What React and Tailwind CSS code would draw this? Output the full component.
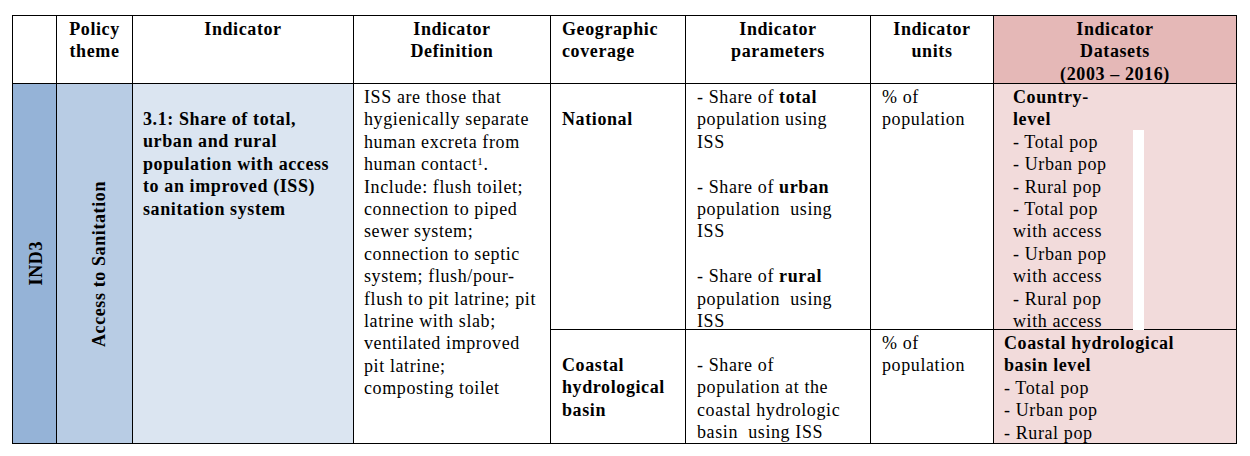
export default function App() {
  const cell = "border-r border-b border-black";
  return (
    <div className="w-[1250px] h-[456px] bg-white pt-[15px] pl-[12px] text-black text-[18px] leading-[22.4px] tracking-[0.6px]" style={{ fontFamily: '"Liberation Serif", "Times New Roman", serif' }}>
      <div className="grid grid-cols-[44px_76px_221px_197px_135px_185px_123px_243px] grid-rows-[68px_246px_114px] w-max border-l border-t border-black">
        {/* header row */}
        <div className={cell}></div>
        <div className={`${cell} font-bold text-center pt-[2px]`}>Policy<br />theme</div>
        <div className={`${cell} font-bold text-center pt-[2px]`}>Indicator</div>
        <div className={`${cell} font-bold text-center pt-[2px]`}>Indicator<br />Definition</div>
        <div className={`${cell} font-bold pl-[11px] pt-[2px]`}>Geographic<br />coverage</div>
        <div className={`${cell} font-bold text-center pt-[2px]`}>Indicator<br />parameters</div>
        <div className={`${cell} font-bold text-center pt-[2px]`}>Indicator<br />units</div>
        <div className={`${cell} font-bold text-center pt-[2px] bg-[#E5B8B7]`}>Indicator<br />Datasets<br />(2003 – 2016)</div>

        {/* body */}
        <div className={`${cell} row-span-2 bg-[#95B3D7] flex items-center justify-center pl-[4px]`}>
          <span className="font-bold [writing-mode:vertical-rl] rotate-180">IND3</span>
        </div>
        <div className={`${cell} row-span-2 bg-[#B8CCE4] flex items-center justify-center pl-[10px]`}>
          <span className="font-bold [writing-mode:vertical-rl] rotate-180">Access to Sanitation</span>
        </div>
        <div className={`${cell} row-span-2 bg-[#DBE5F1] font-bold pl-[10px] pt-[24px]`}>
          3.1: Share of total,<br />urban and rural<br />population with access<br />to an improved (ISS)<br />sanitation system
        </div>
        <div className={`${cell} row-span-2 pl-[10px] pt-[2px]`}>
          ISS are those that<br />hygienically separate<br />human excreta from<br />human contact<sup className="text-[11px]">1</sup>.<br />Include: flush toilet;<br />connection to piped<br />sewer system;<br />connection to septic<br />system; flush/pour-<br />flush to pit latrine; pit<br />latrine with slab;<br />ventilated improved<br />pit latrine;<br />composting toilet
        </div>
        <div className={`${cell} font-bold pl-[11px] pt-[24px]`}>National</div>
        <div className={`${cell} pl-[11px] pt-[2px]`}>
          - Share of <b>total</b><br />population using<br />ISS<br /><br />- Share of <b>urban</b><br />population&nbsp; using<br />ISS<br /><br />- Share of <b>rural</b><br />population&nbsp; using<br />ISS
        </div>
        <div className={`${cell} pl-[11px] pt-[2px]`}>% of<br />population</div>
        <div className={`${cell} bg-[#F2DBDB] flex pl-[19px] pt-[2px]`}>
          <div className="w-[120px]">
            <b>Country-<br />level</b><br />- Total pop<br />- Urban pop<br />- Rural pop<br />- Total pop<br />with access<br />- Urban pop<br />with access<br />- Rural pop<br />with access
          </div>
          <div className="w-[11px] bg-white mt-[44px] -mb-px"></div>
        </div>

        <div className={`${cell} font-bold pl-[11px] pt-[24px]`}>Coastal<br />hydrological<br />basin</div>
        <div className={`${cell} pl-[11px] pt-[24px]`}>- Share of<br />population at the<br />coastal hydrologic<br />basin&nbsp; using ISS</div>
        <div className={`${cell} pl-[11px] pt-[2px]`}>% of<br />population</div>
        <div className={`${cell} bg-[#F2DBDB] pl-[10px] pt-[2px]`}>
          <b>Coastal hydrological<br />basin level</b><br />- Total pop<br />- Urban pop<br />- Rural pop
        </div>
      </div>
    </div>
  );
}
